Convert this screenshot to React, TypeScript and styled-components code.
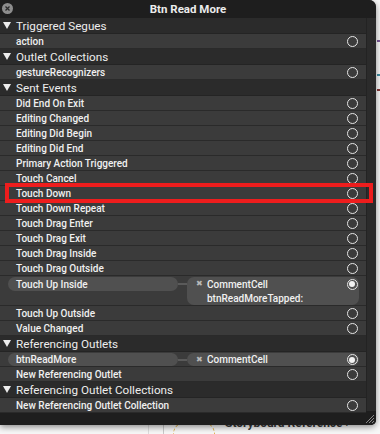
import styled, { createGlobalStyle } from "styled-components";

type Item =
  | { kind: "header"; label: string }
  | { kind: "row"; label: string; highlighted?: boolean }
  | { kind: "link"; label: string; target: string; action?: string };

const items: Item[] = [
  { kind: "header", label: "Triggered Segues" },
  { kind: "row", label: "action" },
  { kind: "header", label: "Outlet Collections" },
  { kind: "row", label: "gestureRecognizers" },
  { kind: "header", label: "Sent Events" },
  { kind: "row", label: "Did End On Exit" },
  { kind: "row", label: "Editing Changed" },
  { kind: "row", label: "Editing Did Begin" },
  { kind: "row", label: "Editing Did End" },
  { kind: "row", label: "Primary Action Triggered" },
  { kind: "row", label: "Touch Cancel" },
  { kind: "row", label: "Touch Down", highlighted: true },
  { kind: "row", label: "Touch Down Repeat" },
  { kind: "row", label: "Touch Drag Enter" },
  { kind: "row", label: "Touch Drag Exit" },
  { kind: "row", label: "Touch Drag Inside" },
  { kind: "row", label: "Touch Drag Outside" },
  {
    kind: "link",
    label: "Touch Up Inside",
    target: "CommentCell",
    action: "btnReadMoreTapped:",
  },
  { kind: "row", label: "Touch Up Outside" },
  { kind: "row", label: "Value Changed" },
  { kind: "header", label: "Referencing Outlets" },
  { kind: "link", label: "btnReadMore", target: "CommentCell" },
  { kind: "row", label: "New Referencing Outlet" },
  { kind: "header", label: "Referencing Outlet Collections" },
  { kind: "row", label: "New Referencing Outlet Collection" },
];

const GlobalStyle = createGlobalStyle`
  html, body {
    margin: 0;
    padding: 0;
    overflow: hidden;
    background: #f7f7f7;
  }
  body {
    font-family: Roboto, "Liberation Sans", sans-serif;
    -webkit-font-smoothing: antialiased;
  }
`;

const Page = styled.div`
  position: relative;
  width: 380px;
  height: 434px;
  overflow: hidden;
  background: #f7f7f7;
`;

const CanvasLine = styled.div<{ $x: number; $color: string }>`
  position: absolute;
  top: 0;
  bottom: 0;
  left: ${(p) => p.$x}px;
  width: 1px;
  background: ${(p) => p.$color};
`;

const CanvasMark = styled.div<{ $y: number; $color: string }>`
  position: absolute;
  right: 0;
  top: ${(p) => p.$y}px;
  width: 3px;
  height: 2px;
  background: ${(p) => p.$color};
`;

const SceneBadge = styled.div`
  position: absolute;
  left: 173px;
  top: 422px;
  width: 40px;
  height: 30px;
  border: 1.5px dashed #e2b552;
  border-radius: 12px;
`;

const SceneTitle = styled.div`
  position: absolute;
  left: 225px;
  top: 416px;
  font-size: 12px;
  font-weight: 700;
  color: #3a3a3a;
  white-space: nowrap;
`;

const Panel = styled.div`
  position: relative;
  z-index: 1;
  width: 376px;
  height: 425px;
  display: flex;
  flex-direction: column;
  background: #1e1e1e;
  border-radius: 0 7px 5px 0;
  box-shadow: 0 2px 6px rgba(0, 0, 0, 0.45);
  overflow: hidden;
`;

const TitleBar = styled.div`
  height: 18px;
  flex: none;
  display: grid;
  grid-template-columns: 18px 1fr 18px;
  align-items: center;
  background: #1e1e1e;
`;

const CloseButton = styled.div`
  width: 11px;
  height: 11px;
  margin-left: 2px;
  margin-top: -2px;
  border-radius: 50%;
  background: #8d8d8d;
  display: flex;
  align-items: center;
  justify-content: center;
`;

const Title = styled.div`
  text-align: center;
  font-size: 11.5px;
  font-weight: 700;
  color: #ececec;
`;

const Body = styled.div`
  flex: 1;
  display: flex;
  min-height: 0;
`;

const List = styled.div`
  width: 366px;
  flex: none;
  display: flex;
  flex-direction: column;

  & > * {
    flex-shrink: 0;
  }
`;

const ScrollTrack = styled.div`
  flex: 1;
  background: #2b2b2b;
  border-left: 1px solid #232323;
`;

const Header = styled.div`
  height: 16px;
  box-sizing: border-box;
  display: flex;
  align-items: center;
  gap: 5px;
  padding-left: 3px;
  background: #2b2b2b;
  border-bottom: 1px solid #242424;
  font-size: 11.7px;
  color: #ededed;
`;

const Row = styled.div<{ $highlighted?: boolean }>`
  position: relative;
  height: 15px;
  box-sizing: border-box;
  display: flex;
  align-items: center;
  justify-content: space-between;
  padding: 0 8px 0 16px;
  background: #3b3b3b;
  border-bottom: 1px solid #2a2a2a;
  font-size: 10px;
  font-weight: 500;
  color: #f0f0f0;

  ${(p) =>
    p.$highlighted &&
    `
    &::after {
      content: "";
      position: absolute;
      left: 5px;
      right: -7px;
      top: -3px;
      bottom: -3px;
      border: 4px solid #ee1d1d;
      z-index: 2;
    }
  `}
`;

const LinkRow = styled.div`
  display: flex;
  align-items: flex-start;
  padding: 1px 0 0 8px;
  background: #3b3b3b;
  border-bottom: 1px solid #2a2a2a;
  font-size: 10px;
  font-weight: 500;
  color: #f0f0f0;
`;

const Pill = styled.div<{ $tall: boolean }>`
  width: 170px;
  height: ${(p) => (p.$tall ? 14 : 13)}px;
  box-sizing: border-box;
  display: flex;
  align-items: center;
  padding-left: 8px;
  border-radius: 7px;
  background: #505050;
`;

const Connector = styled.div<{ $tall: boolean }>`
  width: 9px;
  height: 2px;
  margin-top: ${(p) => (p.$tall ? 6 : 5.5)}px;
  background: #5a5a5a;
`;

const Target = styled.div`
  width: 172px;
  box-sizing: border-box;
  padding: 0 1.5px 0 9px;
  border-radius: 7px;
  background: #505050;
`;

const TargetLine = styled.div<{ $tall: boolean }>`
  height: ${(p) => (p.$tall ? 14 : 13)}px;
  display: flex;
  align-items: center;
  gap: 4px;
`;

const ActionName = styled.div`
  height: 14px;
  display: flex;
  align-items: center;
  padding-left: 11px;
`;

const Cross = styled.span`
  width: 7px;
  font-size: 8px;
  color: #b8b8b8;
  line-height: 1;
`;

const Grow = styled.span`
  flex: 1;
`;

const Socket = styled.div<{ $filled?: boolean }>`
  position: relative;
  width: 11px;
  height: 11px;
  flex: none;
  box-sizing: border-box;
  border: 1.4px solid #e6e6e6;
  border-radius: 50%;

  ${(p) =>
    p.$filled &&
    `
    &::after {
      content: "";
      position: absolute;
      inset: 1.5px;
      border-radius: 50%;
      background: #f2f2f2;
    }
  `}
`;

const Footer = styled.div`
  height: 12px;
  flex: none;
  display: flex;
  justify-content: flex-end;
  align-items: flex-end;
  padding: 0 2px 2px 0;
  background: #1e1e1e;
`;

const Triangle = () => (
  <svg width="8" height="7" viewBox="0 0 8 7">
    <path d="M0 0 H8 L4 7 Z" fill="#ececec" />
  </svg>
);

const CloseGlyph = () => (
  <svg width="5" height="5" viewBox="0 0 5 5">
    <path d="M0.5 0.5 L4.5 4.5 M4.5 0.5 L0.5 4.5" stroke="#2a2a2a" strokeWidth="1.3" />
  </svg>
);

const Grip = () => (
  <svg width="9" height="9" viewBox="0 0 9 9">
    <path
      d="M1 9 L9 1 M4 9 L9 4 M7 9 L9 7"
      stroke="#8a8a8a"
      strokeWidth="1"
      fill="none"
    />
  </svg>
);

const Connection = ({ item }: { item: Extract<Item, { kind: "link" }> }) => {
  const tall = Boolean(item.action);
  return (
    <LinkRow>
      <Pill $tall={tall}>{item.label}</Pill>
      <Connector $tall={tall} />
      <Target>
        <TargetLine $tall={tall}>
          <Cross>✖</Cross>
          <span>{item.target}</span>
          <Grow />
          <Socket $filled />
        </TargetLine>
        {item.action && <ActionName>{item.action}</ActionName>}
      </Target>
    </LinkRow>
  );
};

export default function App() {
  return (
    <Page>
      <GlobalStyle />
      <CanvasLine $x={148} $color="#dcdcdc" />
      <CanvasLine $x={163} $color="#c9c9c9" />
      <CanvasMark $y={40} $color="#7c5a9a" />
      <CanvasMark $y={74} $color="#3f8ea3" />
      <CanvasMark $y={89} $color="#8a3a3a" />
      <SceneBadge />
      <SceneTitle>Storyboard Reference ›</SceneTitle>

      <Panel>
        <TitleBar>
          <CloseButton>
            <CloseGlyph />
          </CloseButton>
          <Title>Btn Read More</Title>
          <span />
        </TitleBar>
        <Body>
          <List>
            {items.map((item) => {
              if (item.kind === "header") {
                return (
                  <Header key={item.label}>
                    <Triangle />
                    {item.label}
                  </Header>
                );
              }
              if (item.kind === "link") {
                return <Connection key={item.label} item={item} />;
              }
              return (
                <Row key={item.label} $highlighted={item.highlighted}>
                  {item.label}
                  <Socket />
                </Row>
              );
            })}
          </List>
          <ScrollTrack />
        </Body>
        <Footer>
          <Grip />
        </Footer>
      </Panel>
    </Page>
  );
}
